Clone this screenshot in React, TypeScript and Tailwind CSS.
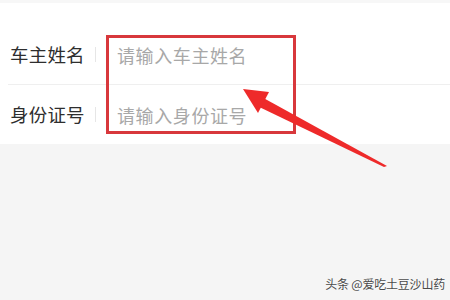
const font = { fontFamily: '"Noto Sans CJK SC", "Noto Sans", sans-serif' };

const Row = ({ label, placeholder }: { label: string; placeholder: string }) => (
  <div className="h-[59px] flex items-center pl-[10px] whitespace-nowrap">
    <span className="shrink-0 text-[18.5px] leading-none text-[#2e2e2e] w-[73px] tracking-[0.2px]">{label}</span>
    <div className="shrink-0 ml-[12px] h-[15px] w-px bg-[#e6e6e6]" />
    <span className="ml-[21px] text-[18px] leading-none text-[#a8a8a8] tracking-[0.6px]">{placeholder}</span>
  </div>
);

export default function App() {
  return (
    <div className="relative w-[450px] h-[300px] overflow-hidden bg-[#f5f5f5]" style={font}>
      <div className="bg-white">
        <div className="h-[3px] bg-[#f7f7f7]" />
        <div className="h-[22px]" />
        <Row label="车主姓名" placeholder="请输入车主姓名" />
        <div className="ml-[8px] h-px bg-[#efefef]" />
        <Row label="身份证号" placeholder="请输入身份证号" />
      </div>

      {/* annotation box */}
      <div className="absolute left-[106px] top-[35px] w-[190px] h-[99px] border-[3px] border-[#d8383c]" />

      {/* annotation arrow */}
      <svg className="absolute inset-0" width="450" height="300" viewBox="0 0 450 300">
        <polygon points="387,166 384,167 253,104 258,95" fill="#ee2a2a" />
        <polygon points="243,89 269,92 258,113" fill="#ee2a2a" />
      </svg>

      <div
        className="absolute right-[5px] bottom-[10px] text-[12px] leading-none text-[#4a4a4a] tracking-[-0.2px]"
        style={{ textShadow: '0 0 2px #ffffff' }}
      >
        头条 @爱吃土豆沙山药
      </div>
    </div>
  );
}
